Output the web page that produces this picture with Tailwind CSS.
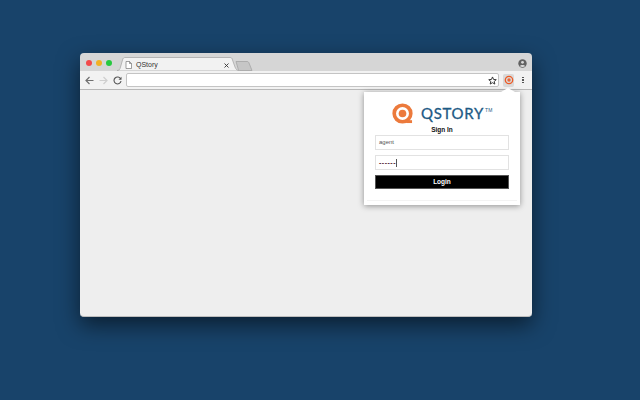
<!DOCTYPE html>
<html><head><meta charset="utf-8"><script src="https://cdn.jsdelivr.net/npm/@tailwindcss/browser@4"></script></head>
<body class="m-0 overflow-hidden">
<div class="w-[640px] h-[400px] bg-[#18436a] pt-[53px] pl-[80px] font-['Liberation_Sans',sans-serif]">
  <div class="relative w-[452px] h-[264px] rounded-[4px] overflow-visible flex flex-col shadow-[0_8px_22px_rgba(0,0,0,0.55)]">
    <div class="relative h-[18px] bg-[#d6d6d6] rounded-t-[4px] flex items-center shrink-0">
      <div class="flex gap-[4px] ml-[6px] mt-[1px]">
        <span class="w-[6px] h-[6px] rounded-full bg-[#f2494a]"></span>
        <span class="w-[6px] h-[6px] rounded-full bg-[#f2b124]"></span>
        <span class="w-[6px] h-[6px] rounded-full bg-[#27c93f]"></span>
      </div>
      <svg class="absolute left-[37px] top-[4px]" width="122" height="14" viewBox="0 0 122 14"><path d="M0 13.500C2 13.500 3 12.500 3.500 10L5.500 3C6 1 7 .5 8 .5H113C114.500 .5 115 1 115.500 3L118 10C119 12.500 120 13.500 122 13.500V14H0Z" fill="#f2f2f2" stroke="#a8a8a8" stroke-width=".8"/></svg>
      <svg class="absolute left-[45px] top-[8px]" width="7" height="8" viewBox="0 0 7 8"><path d="M1 .5H4.500L6.500 2.500V7.500H1ZM4.500 .5V2.500H6.500" fill="#fff" stroke="#777" stroke-width=".7"/></svg>
      <span class="absolute left-[56px] top-[7px] text-[7px] leading-[9px] text-[#333]">QStory</span>
      <svg class="absolute left-[144px] top-[10px]" width="5" height="5" viewBox="0 0 5 5"><path d="M.5.5L4.500 4.500M4.500.5L.5 4.500" stroke="#333" stroke-width=".9"/></svg>
      <svg class="absolute left-[155px] top-[8px]" width="19" height="10" viewBox="0 0 19 10"><path d="M1 .5H12C13 .5 13.500 1 14 2L17 9.500H5C4 9.500 3.500 9 3.200 8Z" fill="#c6c6c6" stroke="#a4a4a4" stroke-width=".8"/></svg>
      <svg class="absolute left-[438px] top-[6px]" width="9" height="9" viewBox="0 0 9 9"><circle cx="4.500" cy="4.500" r="4.200" fill="#616161"/><circle cx="4.500" cy="3.300" r="1.400" fill="#d8d8d8"/><path d="M1.800 7.200C2.300 5.500 6.700 5.500 7.200 7.200L5 8H4Z" fill="#d8d8d8"/></svg>
    </div>
    <div class="relative h-[19px] bg-[#f2f2f2] border-b border-[#b8b8b8] flex items-center shrink-0">
      <svg class="ml-[5px]" width="9" height="9" viewBox="0 0 9 9"><path d="M8.500 4.500H1.500M4.500 1L1 4.500L4.500 8" fill="none" stroke="#707070" stroke-width="1.200"/></svg>
      <svg class="ml-[5px]" width="9" height="9" viewBox="0 0 9 9"><path d="M.5 4.500H7.500M4.500 1L8 4.500L4.500 8" fill="none" stroke="#cfcfcf" stroke-width="1.200"/></svg>
      <svg class="ml-[5px]" width="9" height="9" viewBox="0 0 9 9"><path d="M7.700 3A3.500 3.500 0 1 0 8 5" fill="none" stroke="#555" stroke-width="1.100"/><path d="M8.500.8V3.800H5.500Z" fill="#555"/></svg>
      <div class="ml-[4px] w-[373px] h-[14px] bg-white border border-[#c4c4c4] rounded-[2px] flex items-center justify-end pr-[1px]">
        <svg width="9" height="9" viewBox="0 0 24 24"><path d="M12 2.500L14.800 9.200L22 9.800L16.500 14.500L18.200 21.500L12 17.800L5.800 21.500L7.500 14.500L2 9.800L9.200 9.200Z" fill="#fff" stroke="#333" stroke-width="2.600" stroke-linejoin="round"/></svg>
      </div>
      <div class="ml-[4px] w-[11px] h-[13px] bg-[#d9d9d9] rounded-[2px] flex items-center justify-center">
        <svg width="10" height="10" viewBox="0 0 10 10"><circle cx="5" cy="5" r="3.700" fill="none" stroke="#ee5a24" stroke-width="1.300"/><circle cx="5" cy="5" r="1.700" fill="#e8673a"/></svg>
      </div>
      <div class="ml-[8px] flex flex-col gap-[1px]">
        <span class="w-[1.500px] h-[1.500px] bg-[#555]"></span><span class="w-[1.500px] h-[1.500px] bg-[#555]"></span><span class="w-[1.500px] h-[1.500px] bg-[#555]"></span>
      </div>
    </div>
    <div class="flex-1 bg-[#eeeeee] rounded-b-[4px] border-b border-[#bdbdbd]"></div>
    <svg class="absolute left-[421px] top-[35px] z-10" width="14" height="4" viewBox="0 0 14 4"><path d="M0 4L7 0L14 4Z" fill="#fff"/></svg>
    <div class="absolute left-[284px] top-[39px] w-[156px] h-[113px] bg-white shadow-[0_1px_6px_rgba(0,0,0,0.4)] flex flex-col pt-[11px] pl-[11px]">
      <div class="flex items-center h-[21px] ml-[17px]">
        <svg width="21" height="21" viewBox="0 0 22 22"><circle cx="11" cy="11" r="8.700" fill="none" stroke="#ec7a3c" stroke-width="3.800"/><circle cx="11" cy="11" r="4" fill="#ec7a3c"/><path d="M15 19.500L21 19.500" stroke="#ec7a3c" stroke-width="3"/></svg>
        <span class="ml-[8px] text-[15px] leading-[21px] tracking-[0.7px] text-[#1d5a85] font-['Lato',sans-serif] font-normal [-webkit-text-stroke:0.3px_#1d5a85]">QSTORY</span>
        <span class="ml-[1px] text-[5px] leading-[6px] text-[#1d5a85] self-start mt-[4px]">TM</span>
      </div>
      <div class="mt-[1px] w-[134px] text-center text-[6.500px] leading-[9px] font-bold text-[#111]">Sign In</div>
      <div class="mt-[1px] w-[134px] h-[15px] border border-[#e2e2e2] bg-white flex items-center pl-[3px] text-[6px] text-[#555]">agent</div>
      <div class="mt-[5px] w-[134px] h-[15px] border border-[#e2e2e2] bg-white flex items-center pl-[3px]">
        <span class="text-[7px] leading-[8px] tracking-[0.5px] text-[#552233] font-bold">------</span><span class="w-px h-[8px] bg-[#555]"></span>
      </div>
      <div class="mt-[5px] w-[134px] h-[14px] bg-black border border-[#555] flex items-center justify-center text-[6.500px] font-bold text-white">Login</div>
      <div class="absolute left-[3px] right-[3px] bottom-[4px] h-px bg-[#f3f3f3]"></div>
    </div>
  </div>
</div>
</body></html>
